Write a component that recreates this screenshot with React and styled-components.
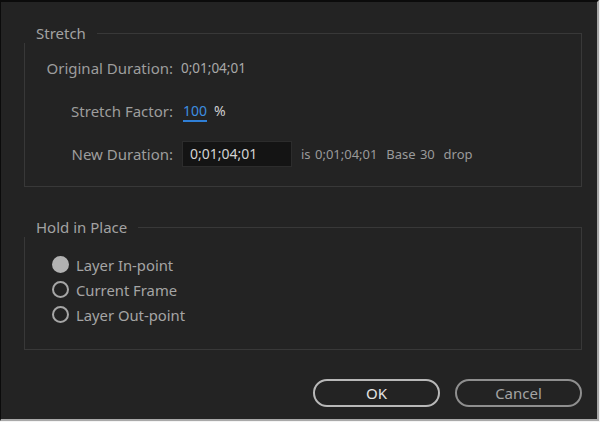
import styled, { createGlobalStyle } from "styled-components";

const Global = createGlobalStyle`
  html, body {
    margin: 0;
    padding: 0;
    background: #ffffff;
  }
  body {
    font-family: "Noto Sans", "Open Sans", sans-serif;
  }
`;

const Frame = styled.div`
  width: 600px;
  height: 422px;
  box-sizing: border-box;
  padding: 0 1px 1px 0;
  background: #f4f4f4;
`;

const Dialog = styled.div`
  height: 100%;
  box-sizing: border-box;
  background: #232323;
  border-top: 2px solid #0b0b0b;
  border-left: 1px solid #0b0b0b;
  border-right: 2px solid #a9a9a9;
  border-bottom: 2px solid #a9a9a9;
  padding: 22px 15px 0 23px;
  display: flex;
  flex-direction: column;
`;

const Group = styled.fieldset`
  margin: 0;
  padding: 0;
  border: 1px solid #383838;
  min-width: 0;
`;

const Legend = styled.legend`
  padding: 0 11px 0 12px;
  margin-left: -1px;
  font-size: 15px;
  line-height: 19px;
  color: #a2a2a2;
`;

const Body = styled.div`
  padding: ${(p) => p.$pad};
`;

const Form = styled.div`
  display: grid;
  grid-template-columns: 127px auto;
  column-gap: 8px;
  row-gap: 17px;
  align-items: center;
`;

const Label = styled.span`
  justify-self: end;
  white-space: nowrap;
  font-size: 15px;
  line-height: 26px;
  color: #9d9d9d;
`;

const Value = styled.div`
  display: flex;
  align-items: center;
  gap: 7px;
  font-size: 13.5px;
  line-height: 26px;
  color: #a9a9a9;
  white-space: nowrap;
  margin-left: ${(p) => p.$shift || 0}px;
`;

const Factor = styled.span`
  font-size: 14px;
  color: #3d8ee0;
  border-bottom: 2px solid #2f7fd6;
  line-height: 18px;
  padding-top: 1px;
`;

const Percent = styled.span`
  font-size: 14px;
  color: #cfcfcf;
`;

const Field = styled.div`
  width: 110px;
  height: 26px;
  box-sizing: border-box;
  background: #141414;
  border: 1px solid #2c2c2c;
  padding-left: 7px;
  color: #d2d2d2;
  font-size: 14px;
  line-height: 24px;
`;

const Note = styled.span`
  margin-left: 2px;
  font-size: 13px;
  color: #9a9a9a;
  word-spacing: 1px;
`;

const Options = styled.div`
  display: flex;
  flex-direction: column;
`;

const Option = styled.label`
  display: flex;
  align-items: center;
  gap: 7px;
  height: 25px;
  font-size: 14.8px;
  color: #a5a5a5;
`;

const Dot = styled.span`
  width: 17px;
  height: 17px;
  box-sizing: border-box;
  border-radius: 50%;
  border: 2px solid ${(p) => (p.$on ? "#b2b2b2" : "#a6a6a6")};
  background: ${(p) => (p.$on ? "#b2b2b2" : "transparent")};
`;

const Buttons = styled.div`
  display: flex;
  justify-content: flex-end;
  gap: 15px;
  margin-top: 29px;
`;

const Button = styled.button`
  width: 127px;
  height: 28px;
  box-sizing: border-box;
  border-radius: 14px;
  border: 2px solid ${(p) => (p.$primary ? "#b8b8b8" : "#8f8f8f")};
  background: transparent;
  color: ${(p) => (p.$primary ? "#e4e4e4" : "#a4a4a4")};
  font-family: inherit;
  font-size: 15px;
  cursor: pointer;
`;

const Spacer = styled.div`
  height: 31px;
`;

export default function App() {
  return (
    <>
      <Global />
      <Frame>
        <Dialog>
          <Group>
            <Legend>Stretch</Legend>
            <Body $pad="12px 20px 19px 21px">
              <Form>
                <Label>Original Duration:</Label>
                <Value>0;01;04;01</Value>
                <Label>Stretch Factor:</Label>
                <Value $shift={2}>
                  <Factor>100</Factor>
                  <Percent>%</Percent>
                </Value>
                <Label>New Duration:</Label>
                <Value $shift={1}>
                  <Field>0;01;04;01</Field>
                  <Note>is 0;01;04;01&nbsp; Base 30&nbsp; drop</Note>
                </Value>
              </Form>
            </Body>
          </Group>
          <Spacer />
          <Group>
            <Legend>Hold in Place</Legend>
            <Body $pad="15px 20px 22px 27px">
              <Options>
                <Option>
                  <Dot $on />
                  Layer In-point
                </Option>
                <Option>
                  <Dot />
                  Current Frame
                </Option>
                <Option>
                  <Dot />
                  Layer Out-point
                </Option>
              </Options>
            </Body>
          </Group>
          <Buttons>
            <Button $primary>OK</Button>
            <Button>Cancel</Button>
          </Buttons>
        </Dialog>
      </Frame>
    </>
  );
}
